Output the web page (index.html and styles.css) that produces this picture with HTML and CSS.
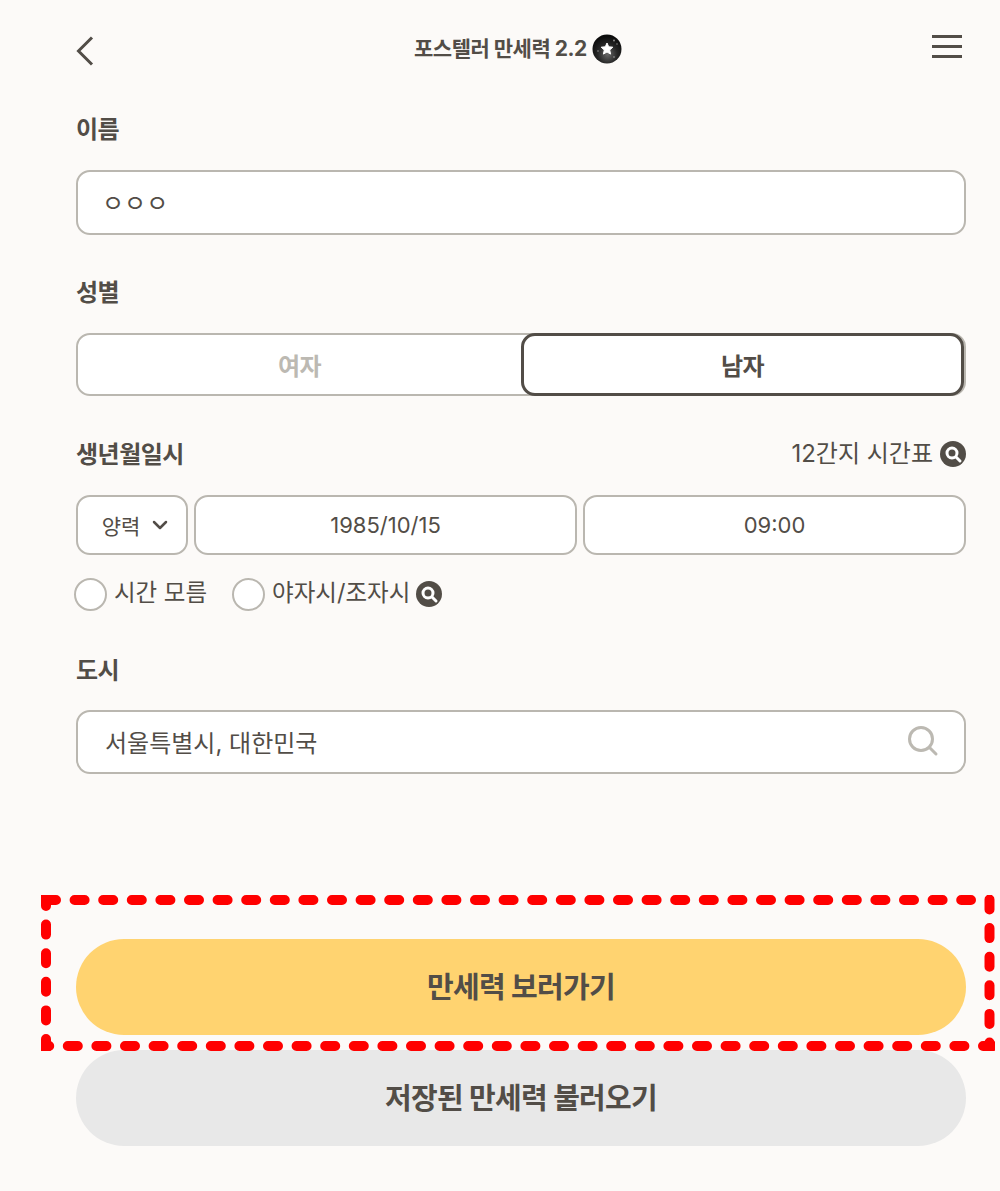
FILE: index.html
```html
<!DOCTYPE html>
<html lang="ko">
<head>
    <meta charset="UTF-8">
    <meta name="viewport" content="width=device-width, initial-scale=1.0">
    <title>포스텔러 만세력 2.2</title>
    <link rel="stylesheet" href="styles.css">
</head>
<body>
    <div class="page">
        <div class="header">
            <svg class="back" width="18" height="30" viewBox="0 0 18 30"><path d="M16 1.500 L2.500 15 L16 28.500" fill="none" stroke="#524d47" stroke-width="3"/></svg>
            <div class="title">
                <span>포스텔러 만세력 2.2</span>
                <svg width="30" height="30" viewBox="0 0 30 30">
                    <defs>
                        <radialGradient id="moon" cx="52%" cy="68%" r="62%">
                            <stop offset="0" stop-color="#6a6a6a"/>
                            <stop offset="0.55" stop-color="#262626"/>
                            <stop offset="1" stop-color="#0c0c0c"/>
                        </radialGradient>
                    </defs>
                    <circle cx="15" cy="15" r="14.500" fill="url(#moon)"/>
                    <path d="M15 9 L16.700 12.800 L20.800 13.200 L17.700 16 L18.600 20.100 L15 18 L11.400 20.100 L12.300 16 L9.200 13.200 L13.300 12.800 Z" fill="#fff" stroke="#fff" stroke-width="1" stroke-linejoin="round"/>
                    <circle cx="22" cy="6.500" r="0.900" fill="#999"/>
                    <circle cx="25" cy="10" r="0.700" fill="#999"/>
                    <circle cx="6" cy="17" r="0.700" fill="#aaa"/>
                    <circle cx="22" cy="23" r="0.700" fill="#bbb"/>
                </svg>
            </div>
            <div class="menu"><i></i><i></i><i></i></div>
        </div>

        <div class="label name-label">이름</div>
        <div class="field name-field">ㅇㅇㅇ</div>

        <div class="label gender-label">성별</div>
        <div class="toggle">
            <div class="toggle-item">여자</div>
            <div class="toggle-item active">남자</div>
        </div>

        <div class="label-row">
            <div class="label">생년월일시</div>
            <div class="help">
                <span>12간지 시간표</span>
                <svg class="help-icon" width="26" height="26" viewBox="0 0 26 26"><circle cx="13" cy="13" r="13" fill="#524d47"/><circle cx="12" cy="12" r="5" fill="none" stroke="#fff" stroke-width="3"/><path d="M16 16 L20 20" stroke="#fff" stroke-width="3" stroke-linecap="round"/></svg>
            </div>
        </div>
        <div class="date-row">
            <div class="box calendar">
                <span>양력</span>
                <svg width="16" height="10" viewBox="0 0 16 10"><path d="M2 2 L8 8 L14 2" fill="none" stroke="#524d47" stroke-width="2.500" stroke-linecap="round" stroke-linejoin="round"/></svg>
            </div>
            <div class="box date">1985/10/15</div>
            <div class="box date">09:00</div>
        </div>
        <div class="check-row">
            <div class="check"><i class="radio"></i><span>시간 모름</span></div>
            <div class="check">
                <i class="radio"></i><span>야자시/조자시</span>
                <svg class="help-icon" width="26" height="26" viewBox="0 0 26 26"><circle cx="13" cy="13" r="13" fill="#524d47"/><circle cx="12" cy="12" r="5" fill="none" stroke="#fff" stroke-width="3"/><path d="M16 16 L20 20" stroke="#fff" stroke-width="3" stroke-linecap="round"/></svg>
            </div>
        </div>

        <div class="label city-label">도시</div>
        <div class="field city-field">
            <span>서울특별시, 대한민국</span>
            <svg width="32" height="32" viewBox="0 0 32 32"><circle cx="14" cy="14" r="11.500" fill="none" stroke="#bcb9b2" stroke-width="3"/><path d="M23 23 L29 29" stroke="#bcb9b2" stroke-width="3" stroke-linecap="round"/></svg>
        </div>

        <div class="actions">
            <div class="btn btn-primary">만세력 보러가기</div>
            <div class="btn btn-gray">저장된 만세력 불러오기</div>
            <!-- 빨간 점선 표시 -->
            <svg class="highlight" width="954" height="156" viewBox="0 0 954 156">
                <g fill="none" stroke="#ff0000" stroke-width="10" stroke-linecap="round" stroke-dasharray="10 18.600">
                    <path d="M5 5 H930"/>
                    <path d="M948.500 4.500 V160"/>
                    <path d="M952 151 H0"/>
                    <path d="M5 154 V0"/>
                </g>
            </svg>
        </div>
    </div>
</body>
</html>
```

FILE: styles.css
```css
body {
    margin: 0;
    background-color: #fcfaf8;
    color: #524d47;
    font-family: Inter, "Noto Sans CJK KR", sans-serif;
}
.page {
    width: 890px;
    margin-left: 76px;
    height: 1191px;
}
.header {
    display: flex;
    justify-content: space-between;
    align-items: center;
    height: 100px;
    position: relative;
}
.back {
    margin-top: 2px;
}
.title {
    position: absolute;
    left: 338px;
    top: 34px;
    display: flex;
    align-items: center;
    gap: 5px;
    font-size: 21px;
    font-weight: 700;
    line-height: 30px;
    letter-spacing: -0.5px;
}
.menu {
    display: flex;
    flex-direction: column;
    gap: 7px;
    width: 30px;
    margin-right: 4px;
    margin-top: -8px;
}
.menu i {
    display: block;
    height: 3px;
    background-color: #524d47;
}
.label {
    padding-top: 2px;
    font-size: 24px;
    font-weight: 700;
    line-height: 28px;
    letter-spacing: -0.5px;
}
.name-label {
    margin-top: 14px;
}
.field {
    box-sizing: border-box;
    background-color: #fff;
    border: 2px solid #bab7b0;
    border-radius: 14px;
    display: flex;
    align-items: center;
    padding-left: 27px;
    font-size: 24px;
}
.name-field {
    height: 65px;
    margin-top: 26px;
    padding-left: 24px;
    padding-bottom: 2px;
}
.gender-label {
    margin-top: 42px;
}
.toggle {
    box-sizing: border-box;
    display: flex;
    height: 63px;
    margin-top: 26px;
    background-color: #fff;
    border: 2px solid #bab7b0;
    border-radius: 14px;
}
.toggle-item {
    flex: 1;
    display: flex;
    align-items: center;
    justify-content: center;
    font-size: 24px;
    font-weight: 700;
    letter-spacing: -0.5px;
    color: #bcb9b2;
}
.toggle-item.active {
    box-sizing: border-box;
    flex: none;
    width: 443px;
    height: 63px;
    margin: -2px 0 -2px 0;
    border: 3px solid #524d47;
    border-radius: 14px;
    color: #524d47;
}
.label-row {
    display: flex;
    justify-content: space-between;
    align-items: center;
    margin-top: 43px;
}
.help {
    display: flex;
    align-items: center;
    gap: 7px;
    font-size: 24px;
    line-height: 30px;
}
.date-row {
    display: flex;
    gap: 6px;
    margin-top: 26px;
}
.box {
    box-sizing: border-box;
    height: 60px;
    background-color: #fff;
    border: 2px solid #bab7b0;
    border-radius: 14px;
    display: flex;
    align-items: center;
    justify-content: center;
    font-size: 22px;
}
.calendar {
    width: 112px;
    gap: 12px;
    padding-left: 6px;
    font-size: 21px;
}
.date {
    flex: 1;
}
.check-row {
    display: flex;
    align-items: center;
    gap: 25px;
    margin: 22px 0 0 -2px;
}
.check {
    display: flex;
    align-items: center;
    gap: 6px;
    font-size: 23.5px;
    line-height: 32px;
}
.check span {
    padding: 0 0 2px 1px;
}
.radio {
    box-sizing: border-box;
    display: block;
    width: 33px;
    height: 33px;
    background-color: #fff;
    border: 2px solid #bab7b0;
    border-radius: 50%;
}
.city-label {
    margin-top: 44px;
}
.city-field {
    height: 64px;
    margin-top: 25px;
    justify-content: space-between;
    padding-right: 25px;
    padding-bottom: 2px;
}
.actions {
    position: relative;
    margin-top: 165px;
}
.btn {
    box-sizing: border-box;
    height: 96px;
    border-radius: 48px;
    display: flex;
    align-items: center;
    justify-content: center;
    font-size: 29px;
    font-weight: 700;
    letter-spacing: -0.7px;
    padding-bottom: 4px;
}
.btn-primary {
    background-color: #ffd370;
}
.btn-gray {
    margin-top: 15px;
    background-color: #e8e8e8;
}
.highlight {
    position: absolute;
    left: -35px;
    top: -44px;
}
```
